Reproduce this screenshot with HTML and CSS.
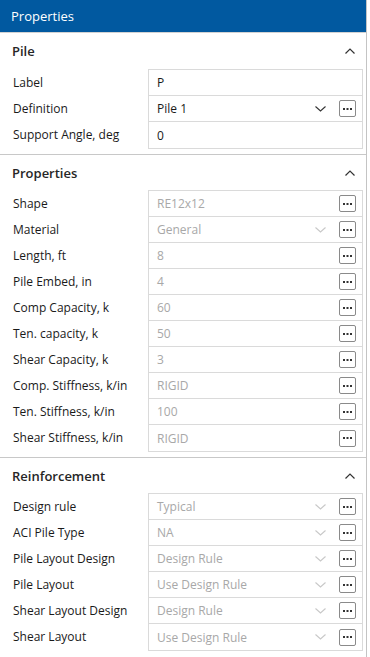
FILE: index.html
```html
<!DOCTYPE html>
<html lang="en">
<head>
    <meta charset="UTF-8">
    <meta name="viewport" content="width=device-width, initial-scale=1.0">
    <title>Properties</title>
    <link rel="stylesheet" href="styles.css">
</head>
<body>
    <div class="panel">
        <div class="titlebar">Properties</div>

        <!-- Pile -->
        <div class="section first">
            <div class="section-head">
                <span>Pile</span>
                <svg class="caret" width="10" height="6" viewBox="0 0 10 6"><polyline points="0.5,5.5 5,1 9.5,5.5" fill="none" stroke="#333" stroke-width="1.2"/></svg>
            </div>
            <div class="rows">
                <div class="label">Label</div>
                <div class="value"><span class="text">P</span></div>
                <div class="label">Definition</div>
                <div class="value">
                    <span class="text">Pile 1</span>
                    <svg class="drop" width="11" height="6" viewBox="0 0 11 6"><polyline points="0.5,0.5 5.5,5 10.5,0.5" fill="none" stroke="#333" stroke-width="1.1"/></svg>
                    <span class="more"><svg width="9" height="2" viewBox="0 0 9 2"><rect x="0" y="0" width="2" height="2"/><rect x="3.5" y="0" width="2" height="2"/><rect x="7" y="0" width="2" height="2"/></svg></span>
                </div>
                <div class="label">Support Angle, deg</div>
                <div class="value"><span class="text">0</span></div>
            </div>
        </div>

        <!-- Properties -->
        <div class="section">
            <div class="section-head">
                <span>Properties</span>
                <svg class="caret" width="10" height="6" viewBox="0 0 10 6"><polyline points="0.5,5.5 5,1 9.5,5.5" fill="none" stroke="#333" stroke-width="1.2"/></svg>
            </div>
            <div class="rows off">
                <div class="label">Shape</div>
                <div class="value"><span class="text">RE12x12</span><span class="more"><svg width="9" height="2" viewBox="0 0 9 2"><rect x="0" y="0" width="2" height="2"/><rect x="3.5" y="0" width="2" height="2"/><rect x="7" y="0" width="2" height="2"/></svg></span></div>
                <div class="label">Material</div>
                <div class="value">
                    <span class="text">General</span>
                    <svg class="drop" width="11" height="6" viewBox="0 0 11 6"><polyline points="0.5,0.5 5.5,5 10.5,0.5" fill="none" stroke="#c8c8c8" stroke-width="1.1"/></svg>
                    <span class="more"><svg width="9" height="2" viewBox="0 0 9 2"><rect x="0" y="0" width="2" height="2"/><rect x="3.5" y="0" width="2" height="2"/><rect x="7" y="0" width="2" height="2"/></svg></span>
                </div>
                <div class="label">Length, ft</div>
                <div class="value"><span class="text">8</span><span class="more"><svg width="9" height="2" viewBox="0 0 9 2"><rect x="0" y="0" width="2" height="2"/><rect x="3.5" y="0" width="2" height="2"/><rect x="7" y="0" width="2" height="2"/></svg></span></div>
                <div class="label">Pile Embed, in</div>
                <div class="value"><span class="text">4</span><span class="more"><svg width="9" height="2" viewBox="0 0 9 2"><rect x="0" y="0" width="2" height="2"/><rect x="3.5" y="0" width="2" height="2"/><rect x="7" y="0" width="2" height="2"/></svg></span></div>
                <div class="label">Comp Capacity, k</div>
                <div class="value"><span class="text">60</span><span class="more"><svg width="9" height="2" viewBox="0 0 9 2"><rect x="0" y="0" width="2" height="2"/><rect x="3.5" y="0" width="2" height="2"/><rect x="7" y="0" width="2" height="2"/></svg></span></div>
                <div class="label">Ten. capacity, k</div>
                <div class="value"><span class="text">50</span><span class="more"><svg width="9" height="2" viewBox="0 0 9 2"><rect x="0" y="0" width="2" height="2"/><rect x="3.5" y="0" width="2" height="2"/><rect x="7" y="0" width="2" height="2"/></svg></span></div>
                <div class="label">Shear Capacity, k</div>
                <div class="value"><span class="text">3</span><span class="more"><svg width="9" height="2" viewBox="0 0 9 2"><rect x="0" y="0" width="2" height="2"/><rect x="3.5" y="0" width="2" height="2"/><rect x="7" y="0" width="2" height="2"/></svg></span></div>
                <div class="label">Comp. Stiffness, k/in</div>
                <div class="value"><span class="text">RIGID</span><span class="more"><svg width="9" height="2" viewBox="0 0 9 2"><rect x="0" y="0" width="2" height="2"/><rect x="3.5" y="0" width="2" height="2"/><rect x="7" y="0" width="2" height="2"/></svg></span></div>
                <div class="label">Ten. Stiffness, k/in</div>
                <div class="value"><span class="text">100</span><span class="more"><svg width="9" height="2" viewBox="0 0 9 2"><rect x="0" y="0" width="2" height="2"/><rect x="3.5" y="0" width="2" height="2"/><rect x="7" y="0" width="2" height="2"/></svg></span></div>
                <div class="label">Shear Stiffness, k/in</div>
                <div class="value"><span class="text">RIGID</span><span class="more"><svg width="9" height="2" viewBox="0 0 9 2"><rect x="0" y="0" width="2" height="2"/><rect x="3.5" y="0" width="2" height="2"/><rect x="7" y="0" width="2" height="2"/></svg></span></div>
            </div>
        </div>

        <!-- Reinforcement -->
        <div class="section last">
            <div class="section-head">
                <span>Reinforcement</span>
                <svg class="caret" width="10" height="6" viewBox="0 0 10 6"><polyline points="0.5,5.5 5,1 9.5,5.5" fill="none" stroke="#333" stroke-width="1.2"/></svg>
            </div>
            <div class="rows off">
                <div class="label">Design rule</div>
                <div class="value">
                    <span class="text">Typical</span>
                    <svg class="drop" width="11" height="6" viewBox="0 0 11 6"><polyline points="0.5,0.5 5.5,5 10.5,0.5" fill="none" stroke="#c8c8c8" stroke-width="1.1"/></svg>
                    <span class="more"><svg width="9" height="2" viewBox="0 0 9 2"><rect x="0" y="0" width="2" height="2"/><rect x="3.5" y="0" width="2" height="2"/><rect x="7" y="0" width="2" height="2"/></svg></span>
                </div>
                <div class="label">ACI Pile Type</div>
                <div class="value">
                    <span class="text">NA</span>
                    <svg class="drop" width="11" height="6" viewBox="0 0 11 6"><polyline points="0.5,0.5 5.5,5 10.5,0.5" fill="none" stroke="#c8c8c8" stroke-width="1.1"/></svg>
                    <span class="more"><svg width="9" height="2" viewBox="0 0 9 2"><rect x="0" y="0" width="2" height="2"/><rect x="3.5" y="0" width="2" height="2"/><rect x="7" y="0" width="2" height="2"/></svg></span>
                </div>
                <div class="label">Pile Layout Design</div>
                <div class="value">
                    <span class="text">Design Rule</span>
                    <svg class="drop" width="11" height="6" viewBox="0 0 11 6"><polyline points="0.5,0.5 5.5,5 10.5,0.5" fill="none" stroke="#c8c8c8" stroke-width="1.1"/></svg>
                    <span class="more"><svg width="9" height="2" viewBox="0 0 9 2"><rect x="0" y="0" width="2" height="2"/><rect x="3.5" y="0" width="2" height="2"/><rect x="7" y="0" width="2" height="2"/></svg></span>
                </div>
                <div class="label">Pile Layout</div>
                <div class="value">
                    <span class="text">Use Design Rule</span>
                    <svg class="drop" width="11" height="6" viewBox="0 0 11 6"><polyline points="0.5,0.5 5.5,5 10.5,0.5" fill="none" stroke="#c8c8c8" stroke-width="1.1"/></svg>
                    <span class="more"><svg width="9" height="2" viewBox="0 0 9 2"><rect x="0" y="0" width="2" height="2"/><rect x="3.5" y="0" width="2" height="2"/><rect x="7" y="0" width="2" height="2"/></svg></span>
                </div>
                <div class="label">Shear Layout Design</div>
                <div class="value">
                    <span class="text">Design Rule</span>
                    <svg class="drop" width="11" height="6" viewBox="0 0 11 6"><polyline points="0.5,0.5 5.5,5 10.5,0.5" fill="none" stroke="#c8c8c8" stroke-width="1.1"/></svg>
                    <span class="more"><svg width="9" height="2" viewBox="0 0 9 2"><rect x="0" y="0" width="2" height="2"/><rect x="3.5" y="0" width="2" height="2"/><rect x="7" y="0" width="2" height="2"/></svg></span>
                </div>
                <div class="label">Shear Layout</div>
                <div class="value">
                    <span class="text">Use Design Rule</span>
                    <svg class="drop" width="11" height="6" viewBox="0 0 11 6"><polyline points="0.5,0.5 5.5,5 10.5,0.5" fill="none" stroke="#c8c8c8" stroke-width="1.1"/></svg>
                    <span class="more"><svg width="9" height="2" viewBox="0 0 9 2"><rect x="0" y="0" width="2" height="2"/><rect x="3.5" y="0" width="2" height="2"/><rect x="7" y="0" width="2" height="2"/></svg></span>
                </div>
            </div>
        </div>
    </div>
</body>
</html>
```

FILE: styles.css
```css
/* General */
body {
    margin: 0;
    padding: 0;
    background: #fff;
    font-family: 'Open Sans', 'Noto Sans', sans-serif;
    color: #1a1a1a;
}
.panel {
    width: 366px;
    height: 657px;
    border-right: 1px solid #c4c4c4;
    box-sizing: content-box;
}

/* Title bar */
.titlebar {
    height: 32px;
    line-height: 32px;
    padding-left: 11px;
    background: #0159a0;
    color: #fff;
    font-size: 13px;
    border-bottom: 1px solid #d2d2d2;
}

/* Sections */
.section {
    padding-bottom: 7px;
    border-bottom: 1px solid #c8c8c8;
}
.section.last {
    border-bottom: none;
}
.section-head {
    height: 35px;
    display: flex;
    align-items: center;
    justify-content: space-between;
    padding: 0 11px 0 12px;
    font-size: 13px;
    font-weight: 600;
    color: #262626;
}
.section.first .section-head {
    height: 36px;
}
.caret {
    display: block;
}

/* Property rows */
.rows {
    display: grid;
    grid-template-columns: 148px 215px;
    grid-auto-rows: 26px;
}
.label {
    display: flex;
    align-items: center;
    padding-left: 13px;
    font-size: 12px;
    color: #1a1a1a;
}
.value {
    display: flex;
    align-items: center;
    padding: 0 6px 0 8px;
    border: 1px solid #dadada;
    border-bottom: none;
    font-size: 12px;
    color: #1a1a1a;
}
.value:last-child {
    border-bottom: 1px solid #dadada;
    height: 26px;
}
.text {
    flex: 1;
}
.off .text {
    color: #a8a8a8;
}
.drop {
    display: block;
    margin-right: 13px;
}
.more {
    width: 15px;
    height: 15px;
    border: 1px solid #8a8a8a;
    border-radius: 2px;
    display: flex;
    align-items: center;
    justify-content: center;
}
.more svg {
    display: block;
    fill: #333;
}
```
